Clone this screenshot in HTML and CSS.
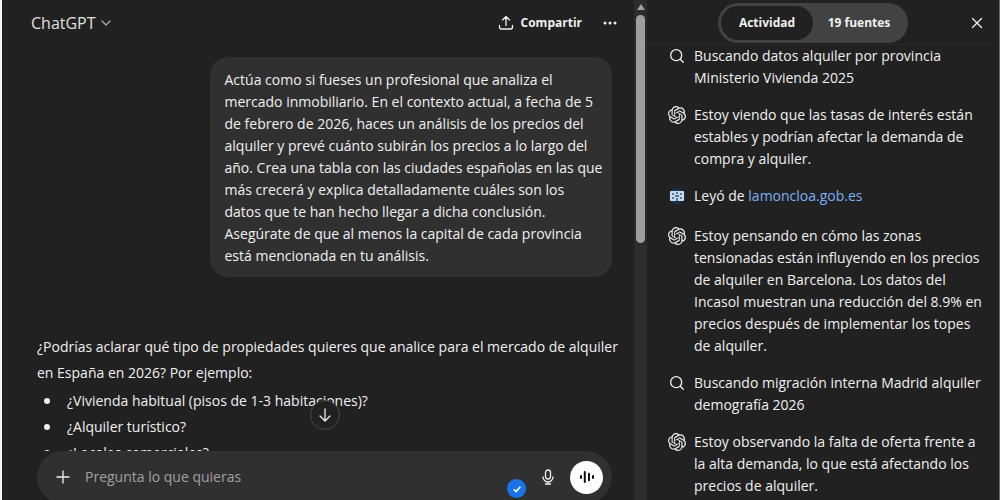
FILE: index.html
```html
<!DOCTYPE html>
<html lang="es">
<head>
    <meta charset="UTF-8">
    <meta name="viewport" content="width=device-width, initial-scale=1.0">
    <title>ChatGPT</title>
    <link rel="stylesheet" href="styles.css">
</head>
<body>
    <svg width="0" height="0" class="sprite" aria-hidden="true">
        <symbol id="openai" viewBox="0 0 24 24">
            <path d="M22.2819 9.8211a5.9847 5.9847 0 0 0-.5157-4.9108 6.0462 6.0462 0 0 0-6.5098-2.9A6.0651 6.0651 0 0 0 4.9807 4.1818a5.9847 5.9847 0 0 0-3.9977 2.9 6.0462 6.0462 0 0 0 .7427 7.0966 5.98 5.98 0 0 0 .511 4.9107 6.051 6.051 0 0 0 6.5146 2.9001A5.9847 5.9847 0 0 0 13.2599 24a6.0557 6.0557 0 0 0 5.7718-4.2058 5.9894 5.9894 0 0 0 3.9977-2.9001 6.0557 6.0557 0 0 0-.7475-7.0729zm-9.022 12.6081a4.4755 4.4755 0 0 1-2.8764-1.0408l.1419-.0804 4.7783-2.7582a.7948.7948 0 0 0 .3927-.6813v-6.7369l2.02 1.1686a.071.071 0 0 1 .038.052v5.5826a4.504 4.504 0 0 1-4.4945 4.4944zm-9.6607-4.1254a4.4708 4.4708 0 0 1-.5346-3.0137l.142.0852 4.783 2.7582a.7712.7712 0 0 0 .7806 0l5.8428-3.3685v2.3324a.0804.0804 0 0 1-.0332.0615L9.74 19.9502a4.4992 4.4992 0 0 1-6.1408-1.6464zM2.3408 7.8956a4.485 4.485 0 0 1 2.3655-1.9728V11.6a.7664.7664 0 0 0 .3879.6765l5.8144 3.3543-2.0201 1.1685a.0757.0757 0 0 1-.071 0l-4.8303-2.7865A4.504 4.504 0 0 1 2.3408 7.872zm16.5963 3.8558L13.1038 8.364 15.1192 7.2a.0757.0757 0 0 1 .071 0l4.8303 2.7913a4.4944 4.4944 0 0 1-.6765 8.1042v-5.6772a.79.79 0 0 0-.407-.667zm2.0107-3.0231l-.142-.0852-4.7735-2.7818a.7759.7759 0 0 0-.7854 0L9.409 9.2297V6.8974a.0662.0662 0 0 1 .0284-.0615l4.8303-2.7866a4.4992 4.4992 0 0 1 6.6802 4.66zM8.3065 12.863l-2.02-1.1638a.0804.0804 0 0 1-.038-.0567V6.0742a4.4992 4.4992 0 0 1 7.3757-3.4537l-.142.0805L8.704 5.459a.7948.7948 0 0 0-.3927.6813zm1.0976-2.3654l2.602-1.4998 2.6069 1.4998v2.9994l-2.5974 1.4997-2.6067-1.4997Z"/>
        </symbol>
        <symbol id="search" viewBox="0 0 18 18">
            <circle cx="8.200" cy="8.200" r="5.500" fill="none" stroke="currentColor" stroke-width="1.3"/>
            <path d="M12.200 12.200 15.300 15.300" fill="none" stroke="currentColor" stroke-width="1.3" stroke-linecap="round"/>
        </symbol>
    </svg>

    <div class="app">
        <main class="chat">
            <header class="chat-header">
                <button class="model" type="button">ChatGPT
                    <svg class="line" width="12" height="12" viewBox="0 0 12 12"><path d="M2 4 6 8 10 4"/></svg>
                </button>
                <button class="share" type="button">
                    <svg class="line" width="16" height="16" viewBox="0 0 16 16"><path d="M8 10.5V1.5M4.5 5 8 1.5 11.5 5M1.500 10.500v1.500a2 2 0 0 0 2 2h9a2 2 0 0 0 2-2v-1.500"/></svg>
                    Compartir
                </button>
                <button class="more" type="button" aria-label="Más opciones">
                    <svg width="16" height="16" viewBox="0 0 16 16" fill="currentColor"><circle cx="3" cy="8" r="1.5"/><circle cx="8" cy="8" r="1.5"/><circle cx="13" cy="8" r="1.5"/></svg>
                </button>
            </header>

            <div class="thread">
                <div class="bubble">Actúa como si fueses un profesional que analiza el<br>
                    mercado inmobiliario. En el contexto actual, a fecha de 5<br>
                    de febrero de 2026, haces un análisis de los precios del<br>
                    alquiler y prevé cuánto subirán los precios a lo largo del<br>
                    año. Crea una tabla con las ciudades españolas en las que<br>
                    más crecerá y explica detalladamente cuáles son los<br>
                    datos que te han hecho llegar a dicha conclusión.<br>
                    Asegúrate de que al menos la capital de cada provincia<br>
                    está mencionada en tu análisis.</div>
                <div class="answer">
                    <p>¿Podrías aclarar qué tipo de propiedades quieres que analice para el mercado de alquiler<br>
                        en España en 2026? Por ejemplo:</p>
                    <ul>
                        <li>¿Vivienda habitual (pisos de 1-3 habitaciones)?</li>
                        <li>¿Alquiler turístico?</li>
                        <li>¿Locales comerciales?</li>
                    </ul>
                </div>
            </div>

            <form class="composer">
                <button class="scroll-down" type="button" aria-label="Bajar">
                    <svg class="line" width="16" height="16" viewBox="0 0 16 16"><path d="M8 2v12M3 9l5 5 5-5"/></svg>
                </button>
                <button type="button" aria-label="Añadir">
                    <svg class="line" width="16" height="16" viewBox="0 0 16 16"><path d="M8 2v12M2 8h12"/></svg>
                </button>
                <input type="text" placeholder="Pregunta lo que quieras" aria-label="Mensaje">
                <button type="button" aria-label="Dictar">
                    <svg class="line" width="16" height="16" viewBox="0 0 16 16"><rect x="5.5" y="1" width="5" height="9" rx="2.5"/><path d="M3 8a5 5 0 0 0 10 0M8 13v2M5.500 15h5"/></svg>
                </button>
                <button class="voice" type="button" aria-label="Modo de voz">
                    <svg width="16" height="16" viewBox="0 0 16 16"><path d="M2 7v2M5.800 3v10M10 4.800v6.400M14 7v2"/></svg>
                </button>
                <span class="check">
                    <svg width="10" height="10" viewBox="0 0 10 10"><path d="M1.800 5.300 4 7.500 8.300 2.800"/></svg>
                </span>
            </form>
        </main>

        <div class="scrollbar">
            <div class="arrow"></div>
            <div class="thumb"></div>
        </div>

        <aside class="panel">
            <header class="panel-header">
                <div class="tabs">
                    <button class="tab active" type="button">Actividad</button>
                    <button class="tab" type="button">19 fuentes</button>
                </div>
                <button class="close" type="button" aria-label="Cerrar">
                    <svg class="line" width="12" height="12" viewBox="0 0 12 12"><path d="M1.500 1.500l9 9M10.500 1.500l-9 9"/></svg>
                </button>
            </header>
            <ul class="activity">
                <li>
                    <svg class="icon"><use href="#search"/></svg>
                    <p>Buscando datos alquiler por provincia<br>Ministerio Vivienda 2025</p>
                </li>
                <li>
                    <svg class="icon"><use href="#openai"/></svg>
                    <p>Estoy viendo que las tasas de interés están<br>estables y podrían afectar la demanda de<br>compra y alquiler.</p>
                </li>
                <li class="source">
                    <svg class="icon" viewBox="0 0 18 18">
                        <circle cx="9" cy="9" r="8" fill="#17314f"/>
                        <rect x="2" y="4" width="14" height="10" rx="1" fill="#c9dcee"/>
                        <path d="M4 6h2v2H4zM12 6h2v2h-2zM4 10h2v2H4zM12 10h2v2h-2zM8 5h2v2H8zM7 8h4v2H7zM8 11h2v3H8z" fill="#56779b"/>
                    </svg>
                    <p>Leyó de <a href="#">lamoncloa.gob.es</a></p>
                </li>
                <li>
                    <svg class="icon"><use href="#openai"/></svg>
                    <p>Estoy pensando en cómo las zonas<br>tensionadas están influyendo en los precios<br>de alquiler en Barcelona. Los datos del<br>Incasol muestran una reducción del 8.9% en<br>precios después de implementar los topes<br>de alquiler.</p>
                </li>
                <li>
                    <svg class="icon"><use href="#search"/></svg>
                    <p>Buscando migración interna Madrid alquiler<br>demografía 2026</p>
                </li>
                <li>
                    <svg class="icon"><use href="#openai"/></svg>
                    <p>Estoy observando la falta de oferta frente a<br>la alta demanda, lo que está afectando los<br>precios de alquiler.</p>
                </li>
            </ul>
        </aside>
    </div>
</body>
</html>
```
FILE: styles.css
```css
* {
    box-sizing: border-box;
}
body {
    margin: 0;
    background: #212121;
    color: #f0f0f0;
    font-family: "Open Sans", "Noto Sans", sans-serif;
    font-size: 14px;
    line-height: 22px;
}
p, ul {
    margin: 0;
    padding: 0;
}
button {
    display: flex;
    align-items: center;
    justify-content: center;
    padding: 0;
    border: 0;
    background: none;
    color: inherit;
    font: inherit;
    cursor: pointer;
}
.sprite {
    position: absolute;
}
.line {
    fill: none;
    stroke: currentColor;
    stroke-width: 1.3;
    stroke-linecap: round;
    stroke-linejoin: round;
}
.app {
    display: flex;
    height: 100vh;
    overflow: hidden;
    border-left: 2px solid #f4f4f4;
    border-right: 1px solid #666;
}

/* chat column */
.chat {
    flex: 1;
    min-width: 0;
    display: flex;
    flex-direction: column;
    padding: 0 22px 0 35px;
}
.chat-header {
    display: flex;
    align-items: center;
    flex: none;
    height: 46px;
    margin: 0 -6px;
}
.model {
    gap: 4px;
    margin-right: auto;
    font-size: 16px;
    color: #e0e0e0;
}
.model svg {
    color: #aaa;
}
.share {
    gap: 7px;
    margin-right: 20px;
    font-size: 12px;
    font-weight: 700;
}
.thread {
    flex: 1;
    min-height: 0;
    overflow: hidden;
    margin-right: -20px;
    padding: 11px 20px 0 0;
    white-space: nowrap;
}
.bubble {
    width: 70%;
    margin: 0 0 57px auto;
    padding: 12px 15px 10px;
    border-radius: 18px;
    background: #303030;
}
.answer {
    line-height: 26px;
}
.answer ul {
    padding: 2px 0 0 7px;
    list-style: none;
}
.answer li {
    display: flex;
    align-items: center;
    gap: 17px;
}
.answer li::before {
    content: "";
    width: 6px;
    height: 6px;
    border-radius: 50%;
    background: #f0f0f0;
}
.composer {
    position: relative;
    display: flex;
    align-items: center;
    flex: none;
    height: 52px;
    margin-bottom: -3px;
    padding: 0 9px 0 18px;
    border-radius: 26px;
    background: #303030;
}
.composer input {
    flex: 1;
    min-width: 0;
    margin: 0 14px;
    padding: 0;
    border: 0;
    outline: 0;
    background: none;
    color: inherit;
    font: inherit;
}
.composer input::placeholder {
    color: #a0a0a0;
    opacity: 1;
}
.voice {
    width: 33px;
    height: 33px;
    margin-left: 14px;
    border-radius: 50%;
    background: #fff;
}
.voice path {
    stroke: #111;
    stroke-width: 2;
    stroke-linecap: round;
}
.scroll-down {
    position: absolute;
    top: -51px;
    left: 50%;
    width: 30px;
    height: 30px;
    margin-left: -15px;
    border: 1px solid #484848;
    border-radius: 50%;
    background: #212121;
}
.check {
    position: absolute;
    right: 86px;
    bottom: 5px;
    display: flex;
    align-items: center;
    justify-content: center;
    width: 19px;
    height: 19px;
    border-radius: 50%;
    background: #1a73e8;
}
.check path {
    fill: none;
    stroke: #fff;
    stroke-width: 1.6;
}

.scrollbar {
    display: flex;
    flex-direction: column;
    align-items: center;
    flex: none;
    width: 13px;
    padding-top: 4px;
    background: #2c2c2c;
}
.arrow {
    border: 4px solid transparent;
    border-top: 0;
    border-bottom: 6px solid #9f9f9f;
}
.thumb {
    width: 9px;
    height: 46%;
    margin-top: 5px;
    border-radius: 5px;
    background: #9f9f9f;
}

/* activity panel */
.panel {
    display: flex;
    flex-direction: column;
    flex: none;
    width: 352px;
}
.panel-header {
    display: flex;
    align-items: center;
    justify-content: space-between;
    flex: none;
    height: 45px;
    padding: 2px 16px 0 71px;
    border-bottom: 1px solid #292929;
}
.tabs {
    display: flex;
    width: 190px;
    height: 40px;
    padding: 3px;
    border-radius: 20px;
    background: #424242;
}
.tab {
    flex: 1;
    border-radius: 17px;
    font-size: 12px;
    font-weight: 700;
}
.tab.active {
    background: #212121;
}
.activity {
    display: flex;
    flex-direction: column;
    gap: 15px;
    flex: 1;
    min-height: 0;
    overflow: hidden;
    padding: 0 16px 0 21px;
    list-style: none;
    white-space: nowrap;
}
.activity li {
    display: flex;
    gap: 8px;
}
.activity .source {
    padding-bottom: 3px;
}
.icon {
    flex: none;
    width: 18px;
    height: 18px;
    margin-top: 2px;
    fill: currentColor;
}
.activity a {
    color: #7ab0f5;
    text-decoration: none;
}
```
